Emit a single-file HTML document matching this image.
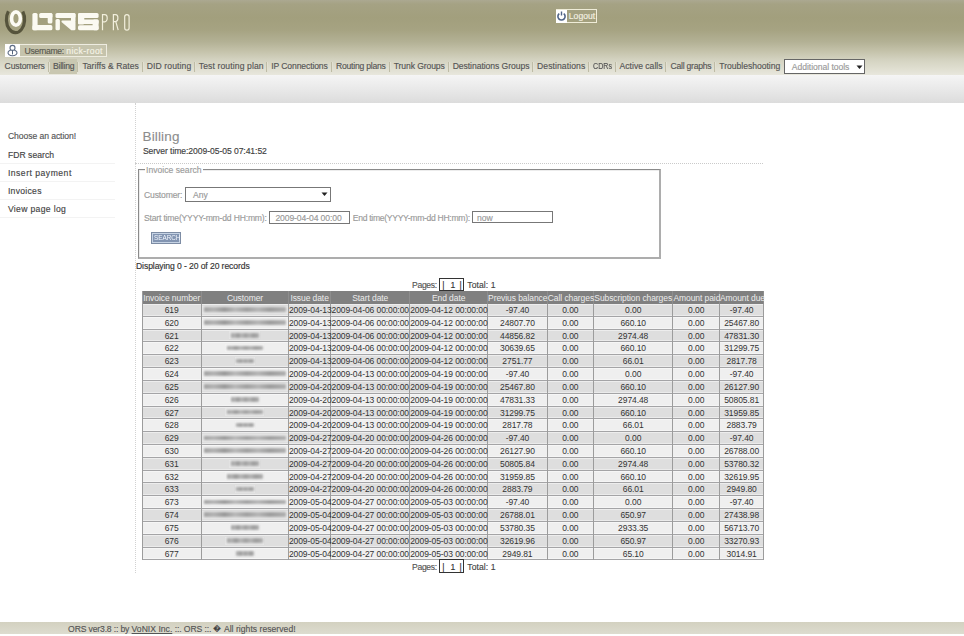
<!DOCTYPE html>
<html><head><meta charset="utf-8">
<style>
*{margin:0;padding:0;box-sizing:border-box}
html,body{width:964px;height:636px;overflow:hidden;background:#fff}
body{-webkit-text-stroke:0.15px currentColor;position:relative;font-family:"Liberation Sans",sans-serif;font-size:8.6px;color:#333;line-height:1}
.a{position:absolute;white-space:nowrap;line-height:1}
#hdr{position:absolute;left:0;top:0;width:964px;height:75px;background:linear-gradient(#aba891 0px,#a5a284 4px,#a29f7d 18px,#a6a382 30px,#b3b195 42px,#c4c2aa 51px,#d4d3c1 60px,#e0dfd1 69px,#e8e7dd 75px)}
#band{position:absolute;left:0;top:75px;width:964px;height:28px;background:linear-gradient(#f5f5f5,#e9e9e9 50%,#dcdcdc)}
.nav{position:absolute;top:62.2px;color:#555;white-space:nowrap;line-height:1}
.sep{position:absolute;top:61.8px;width:1px;height:10px;background:#bebca6;box-shadow:1px 0 0 #e2e0d2}
.side{position:absolute;left:7.9px;color:#444;white-space:nowrap;line-height:1}
.sline{position:absolute;left:0;width:115px;height:1px;background:#f3f3f3}
#vdot{position:absolute;left:135px;top:103px;height:470px;width:0;border-left:1px dotted #d2d2d2}
#hdot{position:absolute;left:135px;top:163px;width:628px;height:0;border-top:1px dotted #cacaca}
#fs{position:absolute;left:137.5px;top:169px;width:523.5px;height:90.2px;border-style:solid;border-width:1px 2px 2px 1px;border-color:#8a8a8a #adadad #adadad #8a8a8a;box-shadow:inset 1px 1px 0 #ececec}
.lbl{color:#9a9a9a}
.inp{position:absolute;border:1px solid #777;background:#fff;color:#999}
.tr{position:absolute;left:142.3px;width:622.1px;height:12.82px;border-bottom:1px solid #a4a4a6;box-shadow:inset 0 1px 0 rgba(255,255,255,.45),inset 0 -1px 0 rgba(255,255,255,.4)}
.trh{position:absolute;left:142.3px;width:622.1px;height:13px;background:#808080}
.th,.td{position:absolute;top:0;text-align:center;white-space:nowrap;overflow:visible;-webkit-text-stroke:0;font-size:8.5px;letter-spacing:-0.08px}
.th{height:13px;line-height:14px}
.td{height:12.82px;line-height:13.9px}
.th{color:#ececec;border-right:1px solid #8e8e8e}
.td{border-right:1px solid #9c9c9c;color:#333}
.tr.o{background:#dedede}
.tr.e{background:#efefef}
.bl{display:inline-block;position:relative;top:-1px;height:8px;vertical-align:middle;background:rgba(255,255,255,.25);filter:blur(.6px)}
.bl i{position:absolute;left:1.5px;right:1.5px;top:1.6px;height:4.6px;background:linear-gradient(90deg,#a2a2a2,#b4b4b4 12%,#999 25%,#b9b9b9 38%,#a0a0a0 52%,#b6b6b6 66%,#9d9d9d 80%,#b0b0b0);filter:blur(1px)}
#foot{position:absolute;left:0;top:622px;width:964px;height:12px;background:linear-gradient(#d3d1c0,#dddccf)}
#tleft{position:absolute;left:142.3px;top:291px;width:1px;height:269.4px;background:#9c9c9c}

</style></head><body>
<div id="hdr"></div>
<div id="band"></div>
<!-- logo -->
<svg class="a" style="left:0;top:0" width="140" height="40" viewBox="0 0 140 40">
  <path d="M8.4 11.2A9.1 13.2 0 1 0 22.8 11.6" fill="none" stroke="#56543c" stroke-width="3.2"/>
  <ellipse cx="15.95" cy="18.55" rx="4.4" ry="6.7" fill="none" stroke="#fcfbf4" stroke-width="3.6"/>
  <g fill="#fbfaf2">
    <rect x="32.4" y="12.9" width="5.2" height="17.4" rx="1.6"/>
    <rect x="32.4" y="25.1" width="20" height="5.2" rx="1.6"/>
    <rect x="39.2" y="12.9" width="13.2" height="5.2" rx="1.6"/>
    <rect x="47.7" y="12.9" width="4.7" height="10.7" rx="1.6"/>
    <rect x="55.5" y="18.9" width="4.4" height="11.4" rx="1.6"/>
    <rect x="55.5" y="12.9" width="20" height="5.2" rx="1.6"/>
    <rect x="71" y="12.9" width="4.5" height="9" rx="1.6"/>
    <path d="M62.5 20.6H74.3Q75.5 20.6 75.5 22V29Q75.5 30.3 74.2 30.3H71.3L61.5 22Q61.2 20.6 62.5 20.6Z"/>
    <rect x="78" y="13" width="20.6" height="5" rx="1.6"/>
    <rect x="78" y="13" width="6.3" height="11.6" rx="1.6"/>
    <rect x="78" y="19.6" width="20.6" height="4.4" rx="1.2"/>
    <rect x="92.6" y="19.6" width="6" height="10.6" rx="1.6"/>
    <rect x="78" y="25.3" width="20.6" height="4.9" rx="1.6"/>
  </g>
  <g fill="none" stroke="#f2efdc" stroke-width="1.2">
    <path d="M102.5 30.2V14.6h2.3a2.4 3.6 0 0 1 0 7.2h-2.3"/>
    <path d="M113.4 30.2V14.6h2.2a2.3 3.5 0 0 1 0 7h-2.2M115.8 21.6l2.4 8.6"/>
    <rect x="124.7" y="14.6" width="4.4" height="15.6" rx="2.2"/>
  </g>
</svg>
<!-- logout -->
<div class="a" style="left:555.5px;top:9px;width:41.6px;height:14px;border:1px solid #efecd8"></div>
<div class="a" style="left:556px;top:9.5px;width:11px;height:13px;background:#fff"></div>
<svg class="a" style="left:556px;top:10px" width="11" height="12" viewBox="0 0 11 12"><path d="M3.3 3.6a3.6 3.6 0 1 0 4.4 0" fill="none" stroke="#4e6286" stroke-width="1.6"/><line x1="5.5" y1="1.5" x2="5.5" y2="5.5" stroke="#4e6286" stroke-width="1.4"/></svg>
<div class="a" style="left:568.8px;top:12px;color:#f3f1e2;letter-spacing:0.021px;">Logout</div>
<!-- username -->
<div class="a" style="left:4.5px;top:43.5px;width:102px;height:13.6px;border:1px solid #eeece0;background:#c5c3ac"></div>
<div class="a" style="left:4.6px;top:44px;width:15.5px;height:12.8px;background:#fff"></div>
<svg class="a" style="left:5px;top:44px" width="16" height="13" viewBox="0 0 16 13"><circle cx="7.5" cy="3.9" r="2.5" fill="none" stroke="#5d6c85" stroke-width="1.1"/><path d="M5.8 6A4.5 3.0 0 1 0 9.2 6" fill="none" stroke="#5d6c85" stroke-width="1.1"/><path d="M7.5 6.4V10.4" stroke="#55667f" stroke-width="1"/></svg>
<div class="a" style="left:24.5px;top:47.2px;color:#5a5a50;letter-spacing:-0.291px;">Username:</div>
<div class="a" style="left:66.2px;top:47.2px;color:#f5f3e6;letter-spacing:0.418px;">nick-root</div>
<!-- nav -->
<div class="a" style="left:48.8px;top:58.7px;width:28.4px;height:15.6px;background:#c9c7b1"></div>
<div class="nav" style="left:4.6px;letter-spacing:-0.156px;">Customers</div><div class="nav" style="left:53px;letter-spacing:-0.240px;">Billing</div><div class="nav" style="left:82.4px;letter-spacing:0.055px;">Tariffs &amp; Rates</div><div class="nav" style="left:146.7px;letter-spacing:0.113px;">DID routing</div><div class="nav" style="left:198.8px;letter-spacing:0.109px;">Test routing plan</div><div class="nav" style="left:271.3px;letter-spacing:-0.126px;">IP Connections</div><div class="nav" style="left:336px;letter-spacing:-0.222px;">Routing plans</div><div class="nav" style="left:393.8px;letter-spacing:-0.111px;">Trunk Groups</div><div class="nav" style="left:452.7px;letter-spacing:-0.060px;">Destinations Groups</div><div class="nav" style="left:537px;letter-spacing:0.082px;">Destinations</div><div class="nav" style="left:592.8px;transform:scaleX(0.826);transform-origin:0 0;">CDRs</div><div class="nav" style="left:619.6px;letter-spacing:-0.008px;">Active calls</div><div class="nav" style="left:670.6px;letter-spacing:-0.257px;">Call graphs</div><div class="nav" style="left:719.3px;letter-spacing:-0.022px;">Troubleshooting</div><div class="sep" style="left:47.5px"></div><div class="sep" style="left:77.2px"></div><div class="sep" style="left:142px"></div><div class="sep" style="left:194px"></div><div class="sep" style="left:266.1px"></div><div class="sep" style="left:330.8px"></div><div class="sep" style="left:388.9px"></div><div class="sep" style="left:447.8px"></div><div class="sep" style="left:532.1px"></div><div class="sep" style="left:587.8px"></div><div class="sep" style="left:615px"></div><div class="sep" style="left:665.3px"></div><div class="sep" style="left:714.1px"></div>
<div class="a" style="left:783.9px;top:58.5px;width:81.6px;height:15px;border:1px solid #666;background:#fff"></div>
<div class="a" style="left:791.8px;top:62.9px;color:#9a9a9a;letter-spacing:-0.046px;">Additional tools</div>
<svg class="a" style="left:855.5px;top:64.8px" width="8" height="5"><path d="M0.5 0.5h6l-3 3.5z" fill="#222"/></svg>
<!-- sidebar -->
<div class="side" style="top:132.4px;color:#555;letter-spacing:-0.068px;">Choose an action!</div>
<div class="side" style="top:150.6px;letter-spacing:0.040px;">FDR search</div>
<div class="sline" style="top:162.5px"></div>
<div class="side" style="top:168.7px;letter-spacing:0.504px;">Insert payment</div>
<div class="sline" style="top:180.5px"></div>
<div class="side" style="top:186.6px;letter-spacing:0.296px;">Invoices</div>
<div class="sline" style="top:198.5px"></div>
<div class="side" style="top:204.5px;letter-spacing:0.338px;">View page log</div>
<div class="sline" style="top:216.5px"></div>
<div id="vdot"></div>
<!-- content -->
<div class="a" style="left:142.5px;top:129.8px;font-size:13.5px;color:#8c8c8c;-webkit-text-stroke:0.1px #8c8c8c;letter-spacing:0.145px;">Billing</div>
<div class="a" style="left:142.9px;top:147.1px;color:#3e3e3e;letter-spacing:-0.071px;">Server time:2009-05-05 07:41:52</div>
<div id="hdot"></div>
<div id="fs"></div>
<div class="a lbl" style="left:144.5px;top:165.8px;background:#fff;padding:0 1.5px;color:#9c9c9c;letter-spacing:0.014px;">Invoice search</div>
<div class="a lbl" style="left:144px;top:190.6px;letter-spacing:-0.155px;">Customer:</div>
<div class="inp" style="left:184.8px;top:187.2px;width:146px;height:14.9px"></div>
<div class="a" style="left:193px;top:190.6px;color:#999">Any</div>
<svg class="a" style="left:321px;top:192px" width="8" height="5"><path d="M0.5 0.5h6l-3 3.5z" fill="#222"/></svg>
<div class="a lbl" style="left:144px;top:213.6px;letter-spacing:-0.187px;">Start time(YYYY-mm-dd HH:mm):</div>
<div class="inp" style="left:269.4px;top:210.7px;width:80.4px;height:13px"></div>
<div class="a" style="left:275.4px;top:213.6px;color:#999;letter-spacing:-0.104px;">2009-04-04 00:00</div>
<div class="a lbl" style="left:352.8px;top:213.6px;letter-spacing:-0.307px;">End time(YYYY-mm-dd HH:mm):</div>
<div class="inp" style="left:472.4px;top:210.7px;width:80.5px;height:12.8px"></div>
<div class="a" style="left:477px;top:213.6px;color:#999">now</div>
<div class="a" style="left:151.2px;top:232px;width:29.8px;height:11.7px;border:1px solid #7d8ca4;background:#8395b2;box-shadow:inset 0 0 0 1px #c6d3e4"></div>
<div class="a" style="left:153.6px;top:234.2px;color:#f4f8ff;font-size:7.4px;-webkit-text-stroke:0;transform:scaleX(0.856);transform-origin:0 0;">SEARCH</div>
<div class="a" style="left:136px;top:262.1px;color:#333;letter-spacing:-0.095px;">Displaying 0 - 20 of 20 records</div>
<div class="a" style="left:412px;top:280.7px;color:#555;letter-spacing:-0.313px;">Pages:</div>
<div class="a" style="left:439.4px;top:277.5px;width:25.1px;height:13.9px;border:1.6px solid #333"></div>
<div class="a" style="left:442.2px;top:280.7px;color:#333">|</div><div class="a" style="left:450.4px;top:280.7px;color:#333">1</div><div class="a" style="left:459.6px;top:280.7px;color:#333">|</div>
<div class="a" style="left:467.3px;top:280.7px;color:#444;letter-spacing:0.083px;">Total: 1</div>
<div class="trh" style="top:291.0px"><div class="th" style="left:0.0px;width:59.8px">Invoice number</div><div class="th" style="left:59.8px;width:86.8px">Customer</div><div class="th" style="left:146.6px;width:42.4px">Issue date</div><div class="th" style="left:189.0px;width:78.9px">Start date</div><div class="th" style="left:267.9px;width:77.9px">End date</div><div class="th" style="left:345.8px;width:59.7px">Previus balance</div><div class="th" style="left:405.5px;width:46.1px">Call charges</div><div class="th" style="left:451.6px;width:79.6px">Subscription charges</div><div class="th" style="left:531.2px;width:46.4px">Amount paid</div><div class="th" style="left:577.6px;width:44.5px">Amount due</div></div>
<div class="tr o" style="top:304.00px"><div class="td" style="left:0.0px;width:59.8px">619</div><div class="td" style="left:59.8px;width:86.8px"><span class="bl" style="width:85.5px"><i></i></span></div><div class="td" style="left:146.6px;width:42.4px">2009-04-13</div><div class="td" style="left:189.0px;width:78.9px">2009-04-06 00:00:00</div><div class="td" style="left:267.9px;width:77.9px">2009-04-12 00:00:00</div><div class="td" style="left:345.8px;width:59.7px">-97.40</div><div class="td" style="left:405.5px;width:46.1px">0.00</div><div class="td" style="left:451.6px;width:79.6px">0.00</div><div class="td" style="left:531.2px;width:46.4px">0.00</div><div class="td" style="left:577.6px;width:44.5px">-97.40</div></div>
<div class="tr e" style="top:316.82px"><div class="td" style="left:0.0px;width:59.8px">620</div><div class="td" style="left:59.8px;width:86.8px"><span class="bl" style="width:85.5px"><i></i></span></div><div class="td" style="left:146.6px;width:42.4px">2009-04-13</div><div class="td" style="left:189.0px;width:78.9px">2009-04-06 00:00:00</div><div class="td" style="left:267.9px;width:77.9px">2009-04-12 00:00:00</div><div class="td" style="left:345.8px;width:59.7px">24807.70</div><div class="td" style="left:405.5px;width:46.1px">0.00</div><div class="td" style="left:451.6px;width:79.6px">660.10</div><div class="td" style="left:531.2px;width:46.4px">0.00</div><div class="td" style="left:577.6px;width:44.5px">25467.80</div></div>
<div class="tr o" style="top:329.64px"><div class="td" style="left:0.0px;width:59.8px">621</div><div class="td" style="left:59.8px;width:86.8px"><span class="bl" style="width:31px"><i></i></span></div><div class="td" style="left:146.6px;width:42.4px">2009-04-13</div><div class="td" style="left:189.0px;width:78.9px">2009-04-06 00:00:00</div><div class="td" style="left:267.9px;width:77.9px">2009-04-12 00:00:00</div><div class="td" style="left:345.8px;width:59.7px">44856.82</div><div class="td" style="left:405.5px;width:46.1px">0.00</div><div class="td" style="left:451.6px;width:79.6px">2974.48</div><div class="td" style="left:531.2px;width:46.4px">0.00</div><div class="td" style="left:577.6px;width:44.5px">47831.30</div></div>
<div class="tr e" style="top:342.46px"><div class="td" style="left:0.0px;width:59.8px">622</div><div class="td" style="left:59.8px;width:86.8px"><span class="bl" style="width:39px"><i></i></span></div><div class="td" style="left:146.6px;width:42.4px">2009-04-13</div><div class="td" style="left:189.0px;width:78.9px">2009-04-06 00:00:00</div><div class="td" style="left:267.9px;width:77.9px">2009-04-12 00:00:00</div><div class="td" style="left:345.8px;width:59.7px">30639.65</div><div class="td" style="left:405.5px;width:46.1px">0.00</div><div class="td" style="left:451.6px;width:79.6px">660.10</div><div class="td" style="left:531.2px;width:46.4px">0.00</div><div class="td" style="left:577.6px;width:44.5px">31299.75</div></div>
<div class="tr o" style="top:355.28px"><div class="td" style="left:0.0px;width:59.8px">623</div><div class="td" style="left:59.8px;width:86.8px"><span class="bl" style="width:20.5px"><i></i></span></div><div class="td" style="left:146.6px;width:42.4px">2009-04-13</div><div class="td" style="left:189.0px;width:78.9px">2009-04-06 00:00:00</div><div class="td" style="left:267.9px;width:77.9px">2009-04-12 00:00:00</div><div class="td" style="left:345.8px;width:59.7px">2751.77</div><div class="td" style="left:405.5px;width:46.1px">0.00</div><div class="td" style="left:451.6px;width:79.6px">66.01</div><div class="td" style="left:531.2px;width:46.4px">0.00</div><div class="td" style="left:577.6px;width:44.5px">2817.78</div></div>
<div class="tr e" style="top:368.10px"><div class="td" style="left:0.0px;width:59.8px">624</div><div class="td" style="left:59.8px;width:86.8px"><span class="bl" style="width:85.5px"><i></i></span></div><div class="td" style="left:146.6px;width:42.4px">2009-04-20</div><div class="td" style="left:189.0px;width:78.9px">2009-04-13 00:00:00</div><div class="td" style="left:267.9px;width:77.9px">2009-04-19 00:00:00</div><div class="td" style="left:345.8px;width:59.7px">-97.40</div><div class="td" style="left:405.5px;width:46.1px">0.00</div><div class="td" style="left:451.6px;width:79.6px">0.00</div><div class="td" style="left:531.2px;width:46.4px">0.00</div><div class="td" style="left:577.6px;width:44.5px">-97.40</div></div>
<div class="tr o" style="top:380.92px"><div class="td" style="left:0.0px;width:59.8px">625</div><div class="td" style="left:59.8px;width:86.8px"><span class="bl" style="width:85.5px"><i></i></span></div><div class="td" style="left:146.6px;width:42.4px">2009-04-20</div><div class="td" style="left:189.0px;width:78.9px">2009-04-13 00:00:00</div><div class="td" style="left:267.9px;width:77.9px">2009-04-19 00:00:00</div><div class="td" style="left:345.8px;width:59.7px">25467.80</div><div class="td" style="left:405.5px;width:46.1px">0.00</div><div class="td" style="left:451.6px;width:79.6px">660.10</div><div class="td" style="left:531.2px;width:46.4px">0.00</div><div class="td" style="left:577.6px;width:44.5px">26127.90</div></div>
<div class="tr e" style="top:393.74px"><div class="td" style="left:0.0px;width:59.8px">626</div><div class="td" style="left:59.8px;width:86.8px"><span class="bl" style="width:31px"><i></i></span></div><div class="td" style="left:146.6px;width:42.4px">2009-04-20</div><div class="td" style="left:189.0px;width:78.9px">2009-04-13 00:00:00</div><div class="td" style="left:267.9px;width:77.9px">2009-04-19 00:00:00</div><div class="td" style="left:345.8px;width:59.7px">47831.33</div><div class="td" style="left:405.5px;width:46.1px">0.00</div><div class="td" style="left:451.6px;width:79.6px">2974.48</div><div class="td" style="left:531.2px;width:46.4px">0.00</div><div class="td" style="left:577.6px;width:44.5px">50805.81</div></div>
<div class="tr o" style="top:406.56px"><div class="td" style="left:0.0px;width:59.8px">627</div><div class="td" style="left:59.8px;width:86.8px"><span class="bl" style="width:39px"><i></i></span></div><div class="td" style="left:146.6px;width:42.4px">2009-04-20</div><div class="td" style="left:189.0px;width:78.9px">2009-04-13 00:00:00</div><div class="td" style="left:267.9px;width:77.9px">2009-04-19 00:00:00</div><div class="td" style="left:345.8px;width:59.7px">31299.75</div><div class="td" style="left:405.5px;width:46.1px">0.00</div><div class="td" style="left:451.6px;width:79.6px">660.10</div><div class="td" style="left:531.2px;width:46.4px">0.00</div><div class="td" style="left:577.6px;width:44.5px">31959.85</div></div>
<div class="tr e" style="top:419.38px"><div class="td" style="left:0.0px;width:59.8px">628</div><div class="td" style="left:59.8px;width:86.8px"><span class="bl" style="width:20.5px"><i></i></span></div><div class="td" style="left:146.6px;width:42.4px">2009-04-20</div><div class="td" style="left:189.0px;width:78.9px">2009-04-13 00:00:00</div><div class="td" style="left:267.9px;width:77.9px">2009-04-19 00:00:00</div><div class="td" style="left:345.8px;width:59.7px">2817.78</div><div class="td" style="left:405.5px;width:46.1px">0.00</div><div class="td" style="left:451.6px;width:79.6px">66.01</div><div class="td" style="left:531.2px;width:46.4px">0.00</div><div class="td" style="left:577.6px;width:44.5px">2883.79</div></div>
<div class="tr o" style="top:432.20px"><div class="td" style="left:0.0px;width:59.8px">629</div><div class="td" style="left:59.8px;width:86.8px"><span class="bl" style="width:85.5px"><i></i></span></div><div class="td" style="left:146.6px;width:42.4px">2009-04-27</div><div class="td" style="left:189.0px;width:78.9px">2009-04-20 00:00:00</div><div class="td" style="left:267.9px;width:77.9px">2009-04-26 00:00:00</div><div class="td" style="left:345.8px;width:59.7px">-97.40</div><div class="td" style="left:405.5px;width:46.1px">0.00</div><div class="td" style="left:451.6px;width:79.6px">0.00</div><div class="td" style="left:531.2px;width:46.4px">0.00</div><div class="td" style="left:577.6px;width:44.5px">-97.40</div></div>
<div class="tr e" style="top:445.02px"><div class="td" style="left:0.0px;width:59.8px">630</div><div class="td" style="left:59.8px;width:86.8px"><span class="bl" style="width:85.5px"><i></i></span></div><div class="td" style="left:146.6px;width:42.4px">2009-04-27</div><div class="td" style="left:189.0px;width:78.9px">2009-04-20 00:00:00</div><div class="td" style="left:267.9px;width:77.9px">2009-04-26 00:00:00</div><div class="td" style="left:345.8px;width:59.7px">26127.90</div><div class="td" style="left:405.5px;width:46.1px">0.00</div><div class="td" style="left:451.6px;width:79.6px">660.10</div><div class="td" style="left:531.2px;width:46.4px">0.00</div><div class="td" style="left:577.6px;width:44.5px">26788.00</div></div>
<div class="tr o" style="top:457.84px"><div class="td" style="left:0.0px;width:59.8px">631</div><div class="td" style="left:59.8px;width:86.8px"><span class="bl" style="width:31px"><i></i></span></div><div class="td" style="left:146.6px;width:42.4px">2009-04-27</div><div class="td" style="left:189.0px;width:78.9px">2009-04-20 00:00:00</div><div class="td" style="left:267.9px;width:77.9px">2009-04-26 00:00:00</div><div class="td" style="left:345.8px;width:59.7px">50805.84</div><div class="td" style="left:405.5px;width:46.1px">0.00</div><div class="td" style="left:451.6px;width:79.6px">2974.48</div><div class="td" style="left:531.2px;width:46.4px">0.00</div><div class="td" style="left:577.6px;width:44.5px">53780.32</div></div>
<div class="tr e" style="top:470.66px"><div class="td" style="left:0.0px;width:59.8px">632</div><div class="td" style="left:59.8px;width:86.8px"><span class="bl" style="width:39px"><i></i></span></div><div class="td" style="left:146.6px;width:42.4px">2009-04-27</div><div class="td" style="left:189.0px;width:78.9px">2009-04-20 00:00:00</div><div class="td" style="left:267.9px;width:77.9px">2009-04-26 00:00:00</div><div class="td" style="left:345.8px;width:59.7px">31959.85</div><div class="td" style="left:405.5px;width:46.1px">0.00</div><div class="td" style="left:451.6px;width:79.6px">660.10</div><div class="td" style="left:531.2px;width:46.4px">0.00</div><div class="td" style="left:577.6px;width:44.5px">32619.95</div></div>
<div class="tr o" style="top:483.48px"><div class="td" style="left:0.0px;width:59.8px">633</div><div class="td" style="left:59.8px;width:86.8px"><span class="bl" style="width:20.5px"><i></i></span></div><div class="td" style="left:146.6px;width:42.4px">2009-04-27</div><div class="td" style="left:189.0px;width:78.9px">2009-04-20 00:00:00</div><div class="td" style="left:267.9px;width:77.9px">2009-04-26 00:00:00</div><div class="td" style="left:345.8px;width:59.7px">2883.79</div><div class="td" style="left:405.5px;width:46.1px">0.00</div><div class="td" style="left:451.6px;width:79.6px">66.01</div><div class="td" style="left:531.2px;width:46.4px">0.00</div><div class="td" style="left:577.6px;width:44.5px">2949.80</div></div>
<div class="tr e" style="top:496.30px"><div class="td" style="left:0.0px;width:59.8px">673</div><div class="td" style="left:59.8px;width:86.8px"><span class="bl" style="width:85.5px"><i></i></span></div><div class="td" style="left:146.6px;width:42.4px">2009-05-04</div><div class="td" style="left:189.0px;width:78.9px">2009-04-27 00:00:00</div><div class="td" style="left:267.9px;width:77.9px">2009-05-03 00:00:00</div><div class="td" style="left:345.8px;width:59.7px">-97.40</div><div class="td" style="left:405.5px;width:46.1px">0.00</div><div class="td" style="left:451.6px;width:79.6px">0.00</div><div class="td" style="left:531.2px;width:46.4px">0.00</div><div class="td" style="left:577.6px;width:44.5px">-97.40</div></div>
<div class="tr o" style="top:509.12px"><div class="td" style="left:0.0px;width:59.8px">674</div><div class="td" style="left:59.8px;width:86.8px"><span class="bl" style="width:85.5px"><i></i></span></div><div class="td" style="left:146.6px;width:42.4px">2009-05-04</div><div class="td" style="left:189.0px;width:78.9px">2009-04-27 00:00:00</div><div class="td" style="left:267.9px;width:77.9px">2009-05-03 00:00:00</div><div class="td" style="left:345.8px;width:59.7px">26788.01</div><div class="td" style="left:405.5px;width:46.1px">0.00</div><div class="td" style="left:451.6px;width:79.6px">650.97</div><div class="td" style="left:531.2px;width:46.4px">0.00</div><div class="td" style="left:577.6px;width:44.5px">27438.98</div></div>
<div class="tr e" style="top:521.94px"><div class="td" style="left:0.0px;width:59.8px">675</div><div class="td" style="left:59.8px;width:86.8px"><span class="bl" style="width:31px"><i></i></span></div><div class="td" style="left:146.6px;width:42.4px">2009-05-04</div><div class="td" style="left:189.0px;width:78.9px">2009-04-27 00:00:00</div><div class="td" style="left:267.9px;width:77.9px">2009-05-03 00:00:00</div><div class="td" style="left:345.8px;width:59.7px">53780.35</div><div class="td" style="left:405.5px;width:46.1px">0.00</div><div class="td" style="left:451.6px;width:79.6px">2933.35</div><div class="td" style="left:531.2px;width:46.4px">0.00</div><div class="td" style="left:577.6px;width:44.5px">56713.70</div></div>
<div class="tr o" style="top:534.76px"><div class="td" style="left:0.0px;width:59.8px">676</div><div class="td" style="left:59.8px;width:86.8px"><span class="bl" style="width:39px"><i></i></span></div><div class="td" style="left:146.6px;width:42.4px">2009-05-04</div><div class="td" style="left:189.0px;width:78.9px">2009-04-27 00:00:00</div><div class="td" style="left:267.9px;width:77.9px">2009-05-03 00:00:00</div><div class="td" style="left:345.8px;width:59.7px">32619.96</div><div class="td" style="left:405.5px;width:46.1px">0.00</div><div class="td" style="left:451.6px;width:79.6px">650.97</div><div class="td" style="left:531.2px;width:46.4px">0.00</div><div class="td" style="left:577.6px;width:44.5px">33270.93</div></div>
<div class="tr e" style="top:547.58px"><div class="td" style="left:0.0px;width:59.8px">677</div><div class="td" style="left:59.8px;width:86.8px"><span class="bl" style="width:20.5px"><i></i></span></div><div class="td" style="left:146.6px;width:42.4px">2009-05-04</div><div class="td" style="left:189.0px;width:78.9px">2009-04-27 00:00:00</div><div class="td" style="left:267.9px;width:77.9px">2009-05-03 00:00:00</div><div class="td" style="left:345.8px;width:59.7px">2949.81</div><div class="td" style="left:405.5px;width:46.1px">0.00</div><div class="td" style="left:451.6px;width:79.6px">65.10</div><div class="td" style="left:531.2px;width:46.4px">0.00</div><div class="td" style="left:577.6px;width:44.5px">3014.91</div></div>
<div id="tleft"></div>
<div class="a" style="left:412px;top:562.7px;color:#555;letter-spacing:-0.313px;">Pages:</div>
<div class="a" style="left:439.4px;top:559.4px;width:25.1px;height:14px;border:1.6px solid #333"></div>
<div class="a" style="left:442.2px;top:562.7px;color:#333">|</div><div class="a" style="left:450.4px;top:562.7px;color:#333">1</div><div class="a" style="left:459.6px;top:562.7px;color:#333">|</div>
<div class="a" style="left:467.3px;top:562.7px;color:#444;letter-spacing:0.083px;">Total: 1</div>
<!-- footer -->
<div id="foot"></div>
<div class="a" style="left:68.1px;top:624.8px;color:#555;letter-spacing:-0.149px;">ORS ver3.8 :: by</div><div class="a" style="left:131.6px;top:624.8px;color:#555;text-decoration:underline;letter-spacing:0.010px;">VoNIX Inc.</div><div class="a" style="left:174.7px;top:624.8px;color:#555;letter-spacing:-0.103px;">::. ORS ::.</div><div class="a" style="left:213.3px;top:624.8px;color:#444;font-size:8px">&#xFFFD;</div><div class="a" style="left:223.9px;top:624.8px;color:#555;letter-spacing:0.028px;">All rights reserved!</div>

</body></html>
